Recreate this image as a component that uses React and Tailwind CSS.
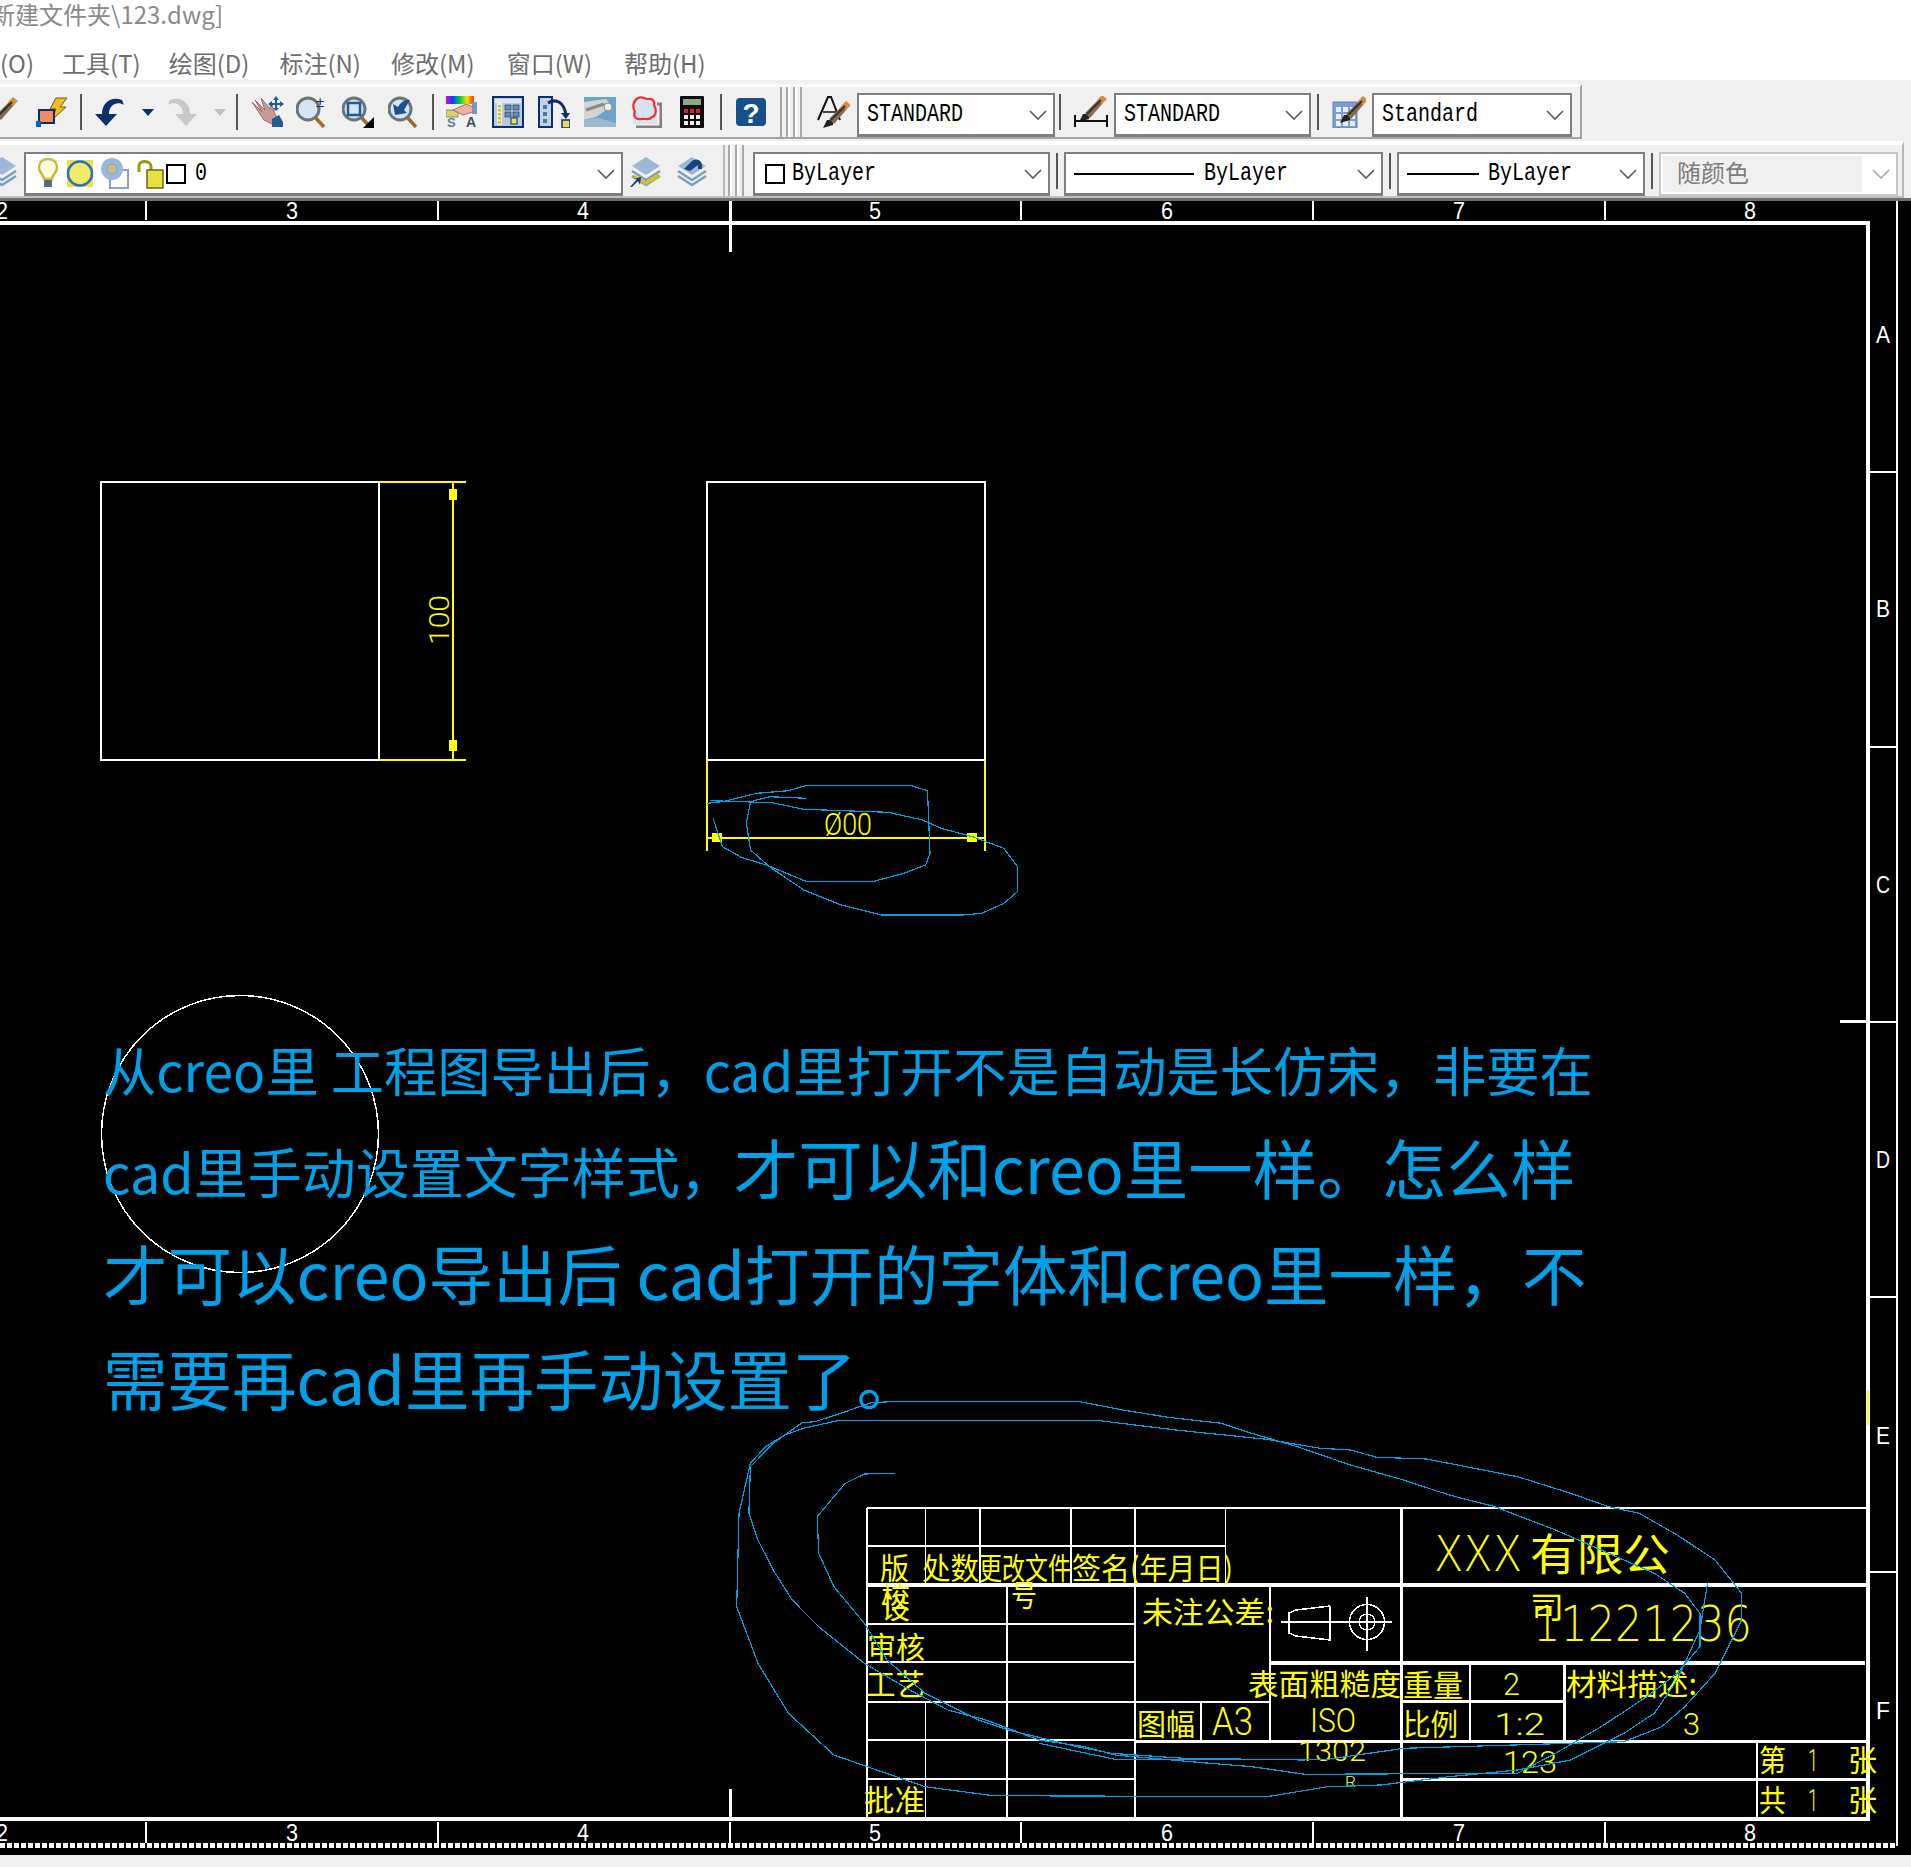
import React from 'react';

const CJK = "font-['Noto_Sans_CJK_SC','Noto_Sans',sans-serif]";
const MONO = "font-['Liberation_Mono','Noto_Sans_CJK_SC',monospace]";
const NAVY = '#0b2f6b';

function Chevron({ color = '#5a5a5a' }) {
  return (
    <svg width="18" height="12" viewBox="0 0 18 12" className="shrink-0">
      <polyline points="1,2 9,10 17,2" fill="none" stroke={color} strokeWidth="1.6" />
    </svg>
  );
}

function Combo({ className, children, disabled = false }) {
  return (
    <div className={`relative flex items-center shrink-0 h-[44px] self-end ${disabled ? 'border-2 border-[#c8c8c8] bg-white' : 'border-2 border-b-[3px] border-[#7f7f7f] bg-white'} ${MONO} text-[20px] text-black ${className}`}>
      {children}
      <div className="absolute right-[6px] top-[14px]">
        <Chevron color={disabled ? '#a8a8a8' : '#5a5a5a'} />
      </div>
    </div>
  );
}

// the combos use a tall narrow bitmap font in the original
function Tall({ className = '', children }) {
  return <span className={`inline-block scale-y-[1.25] ${className}`}>{children}</span>;
}

function Sep({ className = '' }) {
  return <div className={`w-[2px] h-[36px] bg-[#555555] shrink-0 ${className}`} />;
}

function Grip({ className = '' }) {
  return (
    <div className={`flex self-stretch shrink-0 ${className}`}>
      <div className="w-[2px] bg-[#a8a8a8]" />
      <div className="w-[2px] bg-white" />
      <div className="w-[3px]" />
      <div className="w-[2px] bg-[#a8a8a8]" />
      <div className="w-[2px] bg-white" />
      <div className="w-[3px]" />
      <div className="w-[2px] bg-[#a8a8a8]" />
    </div>
  );
}

function Ico({ w = 32, h = 32, className = '', children }) {
  return (
    <svg width={w} height={h} viewBox={`0 0 ${w} ${h}`} className={`shrink-0 ${className}`}>
      {children}
    </svg>
  );
}

const Brush = ({ dx = 0, dy = 0 }) => (
  <g transform={`translate(${dx} ${dy})`}>
    <polygon points="2,28 6,20 12,20 12,25" fill="#222" />
    <polygon points="8,19 22,5 26,9 13,24" fill="#8a6a4a" />
    <polygon points="20,6 25,1 30,5 25,10" fill="#d98a3a" />
    <line x1="10" y1="20" x2="24" y2="6" stroke="#333" strokeWidth="2" />
  </g>
);

const Lens = ({ children }) => (
  <>
    <line x1="18" y1="20" x2="28" y2="31" stroke="#a56a2a" strokeWidth="3.5" />
    <circle cx="12" cy="13" r="11" fill="#d5e6f2" stroke="#6d7478" strokeWidth="3" />
    {children}
  </>
);

const LayerStack = ({ top = '#9db8d6' }) => (
  <g>
    <polygon points="16,2 30,11 16,20 2,11" fill={top} />
    <polyline points="2,16 16,25 30,16" fill="none" stroke="#7f9cbd" strokeWidth="2.5" />
    <polyline points="2,21 16,30 30,21" fill="none" stroke="#7f9cbd" strokeWidth="2.5" />
  </g>
);

function Toolbars() {
  return (
    <div className="h-[121px] bg-[#f0f0f0] flex flex-col shrink-0 overflow-hidden">
      {/* first row: standard tools + style combos */}
      <div className="mt-[4px] h-[55px] w-[1582px] border-t-[3px] border-white border-b-2 border-b-[#a4a4a4] border-r-2 border-r-[#a4a4a4] flex items-center shrink-0">
        <Ico className="-ml-[12px]"><Brush /></Ico>
        <Ico className="ml-[16px]">
          <polygon points="20,2 31,2 24,11 30,11 16,24 20,13 14,13" fill="#f0c020" stroke="#6d5a10" strokeWidth="1" />
          <rect x="3" y="14" width="15" height="13" fill="#f58a5c" stroke="#0b2f6b" strokeWidth="2" />
          <rect x="0" y="25" width="5" height="6" fill="#0a62c0" />
        </Ico>
        <Sep className="ml-[12px]" />
        <Ico w={33} className="ml-[12px]">
          <path d="M12 30 L1 18 L8 18 C8 6 18 0 28 4 L30 9 C24 5 15 8 15 18 L23 18 Z" fill={NAVY} />
        </Ico>
        <svg width="12" height="8" viewBox="0 0 12 8" className="ml-[15px] shrink-0"><polygon points="0,1 12,1 6,8" fill={NAVY} /></svg>
        <Ico w={33} className="ml-[11px]">
          <path d="M21 30 L32 18 L25 18 C25 6 15 0 5 4 L3 9 C9 5 18 8 18 18 L10 18 Z" fill="#c8c8c8" />
        </Ico>
        <svg width="12" height="8" viewBox="0 0 12 8" className="ml-[16px] shrink-0"><polygon points="0,1 12,1 6,8" fill="#c0c0c8" /></svg>
        <Sep className="ml-[10px]" />
        <Ico w={35} className="ml-[12px]">
          <path d="M2 6 L12 16 L5 4 L15 14 L11 2 L20 13 L21 6 L25 18 L28 24 L22 28 L14 24 Z" fill="#c99a94" stroke="#9c6a66" strokeWidth="1" />
          <polygon points="22,23 29,19 33,26 33,31 22,31" fill="#1f5d97" />
          <path d="M26 0 L29 4 L27 4 L27 7 L30 7 L30 5 L34 8 L30 11 L30 9 L27 9 L27 12 L29 12 L26 15 L23 12 L25 12 L25 9 L22 9 L22 11 L18 8 L22 5 L22 7 L25 7 L25 4 L23 4 Z" fill="#1f5d97" />
        </Ico>
        <Ico className="ml-[11px]">
          <Lens />
          <text x="20" y="11" fontSize="15" fill={NAVY} className="font-['Liberation_Sans']">±</text>
        </Ico>
        <Ico className="ml-[14px]">
          <Lens><rect x="6" y="7" width="12" height="12" fill="none" stroke="#1f5d97" strokeWidth="2.5" /></Lens>
          <polygon points="32,21 32,32 21,32" fill="#000" />
        </Ico>
        <Ico className="ml-[14px]">
          <Lens><path d="M7 19 L5 8 L10 11 C13 6 17 3 22 4 L16 14 L19 17 Z" fill="#1f4f8c" /></Lens>
        </Ico>
        <Sep className="ml-[12px]" />
        <Ico className="ml-[12px]">
          <defs>
            <linearGradient id="rb" x1="0" y1="0" x2="1" y2="0">
              <stop offset="0" stopColor="#e000e0" /><stop offset=".25" stopColor="#0040ff" />
              <stop offset=".5" stopColor="#00d040" /><stop offset=".75" stopColor="#ffe000" /><stop offset="1" stopColor="#ff3000" />
            </linearGradient>
          </defs>
          <rect x="0" y="0" width="28" height="8" fill="url(#rb)" />
          <rect x="0" y="14" width="12" height="7" fill="#dccf70" stroke="#8a8a8a" />
          <rect x="26" y="6" width="5" height="12" fill="#6f9fc8" />
          <path d="M7 14 L20 8 L27 11 L27 16 L17 19 Z" fill="#efb1a6" stroke="#8c5a5a" strokeWidth=".8" />
          <text x="1" y="31" fontSize="13" fill="#6a7a8c" fontWeight="700" className="font-['Liberation_Sans']">S</text>
          <text x="20" y="31" fontSize="14" fill="#44505c" fontWeight="700" className="font-['Liberation_Sans']">A</text>
        </Ico>
        <Ico className="ml-[14px]">
          <rect x="1" y="1" width="30" height="30" fill="#b9c9dc" stroke={NAVY} strokeWidth="2" />
          <rect x="3" y="3" width="26" height="4" fill="#dfe7f1" />
          <rect x="5" y="7" width="5" height="22" fill="#e6ecf3" />
          {[9, 13, 17, 21, 25].map((y) => <rect key={y} x="6" y={y} width="3" height="2.5" fill="#e0c000" />)}
          {[[13, 9], [21, 9], [13, 16], [21, 16]].map(([x, y]) => <rect key={x + '-' + y} x={x} y={y} width="6" height="5" fill="#6b8aa8" stroke={NAVY} strokeWidth=".6" />)}
          <rect x="19" y="22" width="6" height="6" fill="#f0e060" stroke={NAVY} />
        </Ico>
        <Ico className="ml-[14px]">
          <path d="M1 1 H14 V31 H1 Z" fill="#c4d2e2" stroke={NAVY} strokeWidth="2" />
          {[9, 16, 23].map((y) => <rect key={y} x="5" y={y} width="4" height="4" fill="#4a7a9a" />)}
          <path d="M10 7 C18 2 26 6 28 19" fill="none" stroke={NAVY} strokeWidth="3" />
          <polygon points="23,17 32,17 28,23" fill={NAVY} />
          <rect x="24" y="24" width="8" height="8" fill="#ecd95a" stroke={NAVY} strokeWidth="1.5" />
        </Ico>
        <Ico className="ml-[14px]">
          <rect x="0" y="1" width="32" height="30" fill="#6fa3cf" />
          <polygon points="0,6 22,3 28,10 12,21 0,24" fill="#d4d4d0" />
          <polyline points="2,14 20,8" stroke="#8a8a86" strokeWidth="3" fill="none" />
          <polygon points="0,24 14,22 32,27 32,31 0,31" fill="#9cb8ce" />
          <circle cx="24" cy="11" r="4" fill="#eeeeea" stroke="#8a8a86" />
        </Ico>
        <Ico className="ml-[14px]">
          <polyline points="27,8 31,8 31,31 6,31" fill="none" stroke="#808080" strokeWidth="3" />
          <rect x="3" y="4" width="24" height="24" fill="#dce3ec" />
          <path d="M8 2 C12 0 15 3 18 3 C23 2 25 6 24 9 C27 14 26 20 22 21 C19 25 15 22 11 23 C6 24 3 20 5 16 C2 11 3 5 8 2 Z" fill="#d6e2ee" stroke="#ee3030" strokeWidth="2.2" />
        </Ico>
        <Ico w={24} className="ml-[18px]">
          <rect x="0" y="0" width="24" height="32" rx="1" fill="#0c0c0c" />
          <rect x="3" y="3" width="18" height="6" fill="#8aa88a" />
          {[4, 10, 16].map((x) => <rect key={x} x={x} y="13" width="4" height="4" fill="#e02020" />)}
          {[4, 10, 16].map((x) => <rect key={x} x={x} y="19" width="4" height="4" fill="#f0f0f0" />)}
          {[4, 10, 16].map((x) => <rect key={x} x={x} y="25" width="4" height="4" fill="#f0f0f0" />)}
        </Ico>
        <Sep className="ml-[16px]" />
        <Ico w={30} className="ml-[14px]">
          <rect x="0" y="2" width="30" height="28" rx="4" fill="#14508c" />
          <text x="15" y="27" textAnchor="middle" fontSize="28" fontWeight="700" fill="#fff" className="font-['Liberation_Sans']">?</text>
        </Ico>
        <div className="ml-[14px] w-[2px] self-stretch bg-[#a4a4a4] shrink-0" />
        <Grip className="ml-[4px]" />
        <Ico className="ml-[15px]" w={33}>
          <path d="M1 24 L11 1 L14 1 L23 24" fill="none" stroke="#111" strokeWidth="2" />
          <line x1="6" y1="16" x2="19" y2="16" stroke="#111" strokeWidth="1.5" />
          <Brush dx="4" dy="4" />
        </Ico>
        <Combo className="ml-[7px] w-[198px] pl-[8px]"><Tall>STANDARD</Tall></Combo>
        <Sep className="ml-[4px]" />
        <Ico className="ml-[13px]" w={34}>
          <Brush dx="3" dy="-2" />
          <line x1="1" y1="25" x2="33" y2="25" stroke="#111" strokeWidth="2" />
          <line x1="1" y1="19" x2="1" y2="31" stroke="#111" strokeWidth="2" />
          <line x1="33" y1="19" x2="33" y2="31" stroke="#111" strokeWidth="2" />
        </Ico>
        <Combo className="ml-[6px] w-[197px] pl-[8px]"><Tall>STANDARD</Tall></Combo>
        <Sep className="ml-[6px]" />
        <Ico className="ml-[13px]" w={34}>
          <rect x="1" y="6" width="24" height="26" fill="#7d9fd0" stroke="#5f80ad" />
          {[11, 18, 25].map((y) => [4, 11, 18].map((x) => <rect key={x + '-' + y} x={x} y={y} width="5" height="5" fill="#e6edf8" />))}
          <Brush dx="6" dy="-1" />
        </Ico>
        <Combo className="ml-[6px] w-[200px] pl-[8px]"><Tall>Standard</Tall></Combo>
      </div>

      {/* second row: layer + bylayer combos */}
      <div className="mt-[2px] h-[58px] w-[1904px] border-t-[4px] border-white border-b-[3px] border-b-[#c0c0c0] border-r-2 border-r-[#b8b8b8] flex items-center shrink-0">
        <Ico w={16} className="shrink-0 overflow-visible"><g transform="translate(-14 0)"><LayerStack /></g></Ico>
        <Combo className="ml-[8px] w-[599px]">
          <Ico w={20} className="ml-[12px]">
            <path d="M10 1 C16 1 19 5 19 10 C19 14 15 16 14 21 L6 21 C5 16 1 14 1 10 C1 5 4 1 10 1 Z" fill="#fffde0" stroke="#c9bb40" strokeWidth="2.5" />
            <rect x="6" y="22" width="8" height="7" fill="#5a6a80" />
          </Ico>
          <Ico w={28} className="ml-[8px]">
            <rect x="1" y="2" width="26" height="27" fill="#f0e040" />
            <circle cx="14" cy="15.5" r="12" fill="#f3e868" stroke="#1f72c0" strokeWidth="2.5" />
          </Ico>
          <Ico w={30} className="ml-[6px]">
            <rect x="10" y="12" width="18" height="18" fill="#fff" stroke="#8fa3b8" strokeWidth="2" />
            <circle cx="12" cy="11" r="11" fill="#9ab8d8" />
            <circle cx="12" cy="11" r="5" fill="#c7bd85" stroke="#8aa0b0" />
          </Ico>
          <Ico w={28} className="ml-[6px]">
            <path d="M3 14 V8 C3 2 14 2 15 8 V12" fill="none" stroke="#9c9a10" strokeWidth="3" />
            <rect x="11" y="12" width="16" height="18" fill="#e8e040" stroke="#6a6a10" strokeWidth="1.5" />
          </Ico>
          <div className="ml-[2px] w-[20px] h-[20px] border-2 border-black shrink-0" />
          <Tall className="ml-[9px]">0</Tall>
        </Combo>
        <Ico className="ml-[7px]">
          <LayerStack />
          <polygon points="4,20 16,26 28,18 30,22 16,30 4,24" fill="#d8c020" />
          <polygon points="0,32 7,24 3,24 11,22 10,30 8,26 2,32" fill="#163f7a" />
        </Ico>
        <Ico className="ml-[14px]">
          <LayerStack />
          <path d="M8 14 L16 6 C22 2 27 6 26 14 L22 14 L22 10 L14 16 Z" fill="#14437f" />
        </Ico>
        <div className="ml-[15px] w-[2px] self-stretch bg-[#b8b8b8] shrink-0" />
        <Grip className="ml-[3px]" />
        <Combo className="ml-[9px] w-[297px] pl-[10px]">
          <div className="w-[20px] h-[20px] border-2 border-black shrink-0" />
          <Tall className="ml-[7px]">ByLayer</Tall>
        </Combo>
        <Sep className="ml-[6px]" />
        <Combo className="ml-[6px] w-[319px] pl-[8px]">
          <div className="w-[120px] h-[2px] bg-black shrink-0" />
          <Tall className="ml-[10px]">ByLayer</Tall>
        </Combo>
        <Sep className="ml-[6px]" />
        <Combo className="ml-[6px] w-[248px] pl-[8px]">
          <div className="w-[72px] h-[2px] bg-black shrink-0" />
          <Tall className="ml-[9px]">ByLayer</Tall>
        </Combo>
        <Sep className="ml-[6px]" />
        <Combo disabled className="ml-[6px] w-[239px]">
          <div className={`m-[2px] h-[36px] w-[199px] bg-[#f0f0f0] pl-[14px] ${CJK} text-[24px] leading-[32px] text-[#7c7c7c]`}>随颜色</div>
        </Combo>
      </div>
      <div className="h-[3px] bg-[#6e6e6e] shrink-0 -mt-[1px]" />
    </div>
  );
}

// trace helper: points read off the reference crops
const tr = (list, ox, oy, sx) => list.map(([x, y]) => `${(ox + x / sx).toFixed(1)},${(oy + y / 3).toFixed(1)}`).join(' ');

const curves = [
  tr([[190, 75], [200, 68], [225, 65], [474, 65], [530, 90], [590, 112], [660, 130], [700, 160], [760, 200], [830, 255], [900, 300], [960, 345], [1020, 380], [1100, 450], [1170, 520], [1230, 580], [1270, 640], [1290, 700], [1290, 800], [1260, 880], [1220, 950], [1160, 1040], [1100, 1120], [1050, 1180], [770, 1183], [700, 1160], [620, 1145], [520, 1125], [480, 1100], [420, 1080], [350, 1020], [300, 990], [250, 930], [190, 850], [130, 740], [95, 660], [70, 570], [50, 480], [38, 400], [40, 260], [70, 190], [108, 128], [125, 125], [165, 95], [190, 75]], 720, 1380, 1.3165),
  tr([[85, 165], [110, 145], [155, 122], [500, 122], [600, 150], [720, 178], [790, 205], [830, 210], [865, 232], [930, 237], [1050, 290], [1120, 340], [1170, 380], [1210, 400], [1260, 465], [1310, 540], [1345, 640], [1345, 720], [1310, 880], [1270, 980], [1240, 1040], [1190, 1085], [900, 1105], [800, 1138], [520, 1138], [420, 1090]], 720, 1380, 1.3165),
  tr([[230, 280], [190, 282], [165, 310], [150, 350], [128, 410], [130, 520], [150, 620], [190, 730], [220, 840], [270, 940], [340, 1020], [380, 1050], [470, 1100], [515, 1120], [610, 1135], [770, 1140]], 720, 1380, 1.3165),
  tr([[85, 165], [60, 200], [40, 250], [25, 400], [22, 680], [50, 850], [90, 1000], [150, 1125], [200, 1165], [270, 1220], [360, 1247], [720, 1250], [800, 1220], [870, 1215], [960, 1190], [1050, 1170], [1120, 1140], [1190, 1060], [1230, 1000], [1260, 900], [1290, 750], [1300, 610]], 720, 1380, 1.3165),
  tr([[1195, 1015], [1135, 1010], [1105, 1025], [1098, 1090], [1105, 1170], [1135, 1220], [1190, 1290], [1250, 1335], [1315, 1365], [1445, 1365], [1475, 1360], [1510, 1330], [1532, 1295], [1532, 1220], [1510, 1165], [1460, 1130], [1410, 1105], [1380, 1080], [1325, 1057], [1190, 1048], [1140, 1028], [1040, 1022]], 60, 460, 1.6),
  tr([[1035, 1030], [1060, 1025], [1115, 1000], [1165, 992], [1195, 976], [1360, 976], [1388, 992], [1392, 1180], [1385, 1215], [1350, 1240], [1300, 1265], [1195, 1265], [1130, 1215], [1090, 1192], [1060, 1160], [1045, 1075]], 60, 460, 1.6),
];

// white frame lines of the title block: x1 y1 x2 y2 width
const block = [
  [867, 1508, 1867, 1508, 2], [867, 1546, 1225, 1546, 2], [867, 1585, 1867, 1585, 4], [867, 1624, 1135, 1624, 2],
  [867, 1662, 1135, 1662, 2], [867, 1702, 1270, 1702, 2], [867, 1740, 1135, 1740, 2], [1135, 1741, 1867, 1741, 3],
  [867, 1779, 1135, 1779, 2], [1401, 1779, 1867, 1779, 3], [1270, 1663, 1865, 1663, 4], [1401, 1701, 1564, 1701, 3],
  [867, 1508, 867, 1818, 2], [925, 1508, 925, 1585, 1], [925, 1702, 925, 1818, 1], [980, 1508, 980, 1585, 2],
  [1007, 1585, 1007, 1818, 2], [1071, 1508, 1071, 1585, 2], [1135, 1508, 1135, 1818, 2.5], [1225, 1508, 1225, 1585, 1],
  [1201, 1702, 1201, 1741, 2], [1270, 1585, 1270, 1741, 2], [1401, 1508, 1401, 1818, 3], [1470, 1663, 1470, 1741, 2],
  [1564, 1663, 1564, 1741, 3], [1757, 1741, 1757, 1818, 2],
];

const CT = ({ x, y, len, size = 30, children }) => (
  <text x={x} y={y} textLength={len} lengthAdjust="spacingAndGlyphs" fontSize={size} fill="#ffff00" className={CJK}>{children}</text>
);
// white ruler marks stay regular; yellow drawing text is a thin single-line font in the original
const LT = ({ x, y, len, size = 36, fill = '#ffff00', transform, children }) => {
  let face = "font-['Roboto',sans-serif]";
  let weight = 300;
  if (fill === '#fff') {
    face = "font-['Liberation_Sans',sans-serif]";
    weight = 400;
  } else if (size > 40) {
    face = "font-['DejaVu_Sans',sans-serif]";
    weight = 200;
  }
  return (
    <text x={x} y={y} textLength={len} lengthAdjust="spacingAndGlyphs" fontSize={size} fill={fill} fontWeight={weight} transform={transform} className={face}>
      {children}
    </text>
  );
};

function Drawing() {
  const rulerX = [146, 438, 730, 1021, 1313, 1605, 1897];
  const nums = [[-4, '2'], [286, '3'], [577, '4'], [869, '5'], [1161, '6'], [1453, '7'], [1744, '8']];
  const sideTicks = [472, 747, 1022, 1297, 1572];
  const letters = [['A', 343], ['B', 617], ['C', 893], ['D', 1168], ['E', 1444], ['F', 1719]];

  return (
    <svg width="1911" height="1654" viewBox="0 201 1911 1654" className="block">
      <g stroke="#fff" strokeWidth="2" shapeRendering="crispEdges">
        {/* sheet border and rulers */}
        <rect x="-4" y="223" width="1872" height="1596" fill="none" strokeWidth="4" />
        <line x1="1897" y1="201" x2="1897" y2="1846" />
        {rulerX.map((x) => <line key={x} x1={x} y1="201" x2={x} y2="220" />)}
        {rulerX.map((x) => <line key={x} x1={x} y1="1822" x2={x} y2="1843" />)}
        {sideTicks.map((y) => <line key={y} x1="1870" y1={y} x2="1896" y2={y} />)}
        <line x1="0" y1="1845" x2="1897" y2="1845" strokeWidth="5" strokeDasharray="5 2" />
        <line x1="730" y1="201" x2="730" y2="252" strokeWidth="3" />
        <line x1="730" y1="1789" x2="730" y2="1818" strokeWidth="3" />
        <line x1="1840" y1="1021" x2="1868" y2="1021" strokeWidth="3" />

        {/* the two views */}
        <rect x="101" y="482" width="278" height="278" fill="none" />
        <rect x="707" y="482" width="278" height="278" fill="none" />
        <circle cx="240" cy="1134" r="138.5" fill="none" strokeWidth="1.5" />

        {block.map(([x1, y1, x2, y2, w], i) => <line key={i} x1={x1} y1={y1} x2={x2} y2={y2} strokeWidth={w} />)}

        {/* tolerance symbol */}
        <g fill="none" strokeWidth="1.5">
          <polyline points="1330,1606 1296,1610 1289,1613 1289,1633 1296,1636 1330,1640 1330,1606" />
          <line x1="1281" y1="1622" x2="1392" y2="1622" />
          <line x1="1367" y1="1597" x2="1367" y2="1651" />
          <circle cx="1367" cy="1622" r="17.5" />
          <circle cx="1367" cy="1622" r="8" />
        </g>
      </g>

      {nums.map(([x, n]) => (
        <g key={n}>
          <LT x={x} y="219" len="12" size="24" fill="#fff">{n}</LT>
          <LT x={x} y="1841" len="12" size="24" fill="#fff">{n}</LT>
        </g>
      ))}
      {letters.map(([l, y]) => <LT key={l} x="1876" y={y} len="14" size="24" fill="#fff">{l}</LT>)}

      {/* dimensions */}
      <g stroke="#ffff00" strokeWidth="2" shapeRendering="crispEdges">
        <line x1="379" y1="482" x2="466" y2="482" />
        <line x1="379" y1="760" x2="466" y2="760" />
        <line x1="453" y1="482" x2="453" y2="760" />
        <rect x="450" y="490" width="6" height="9" fill="#ffff00" />
        <rect x="450" y="741" width="6" height="9" fill="#ffff00" />
        <line x1="707" y1="760" x2="707" y2="851" />
        <line x1="985" y1="760" x2="985" y2="851" />
        <line x1="707" y1="838" x2="985" y2="838" />
        <rect x="713" y="834" width="8" height="7" fill="#ffff00" />
        <rect x="968" y="834" width="8" height="7" fill="#ffff00" />
        <line x1="1868" y1="1390" x2="1868" y2="1425" />
      </g>
      <LT x="0" y="0" len="50" size="28" transform="translate(449 645) rotate(-90)">100</LT>
      <LT x="824" y="835" len="48" size="32">Ø00</LT>

      {/* title block text */}
      <CT x="880" y="1579" len="29">版</CT>
      <CT x="922" y="1579" len="57">处数</CT>
      <CT x="979" y="1579" len="92">更改文件</CT>
      <CT x="1072" y="1579" len="58">签名</CT>
      <CT x="1130" y="1579" len="103">(年月日)</CT>
      <CT x="1011" y="1606" len="26">号</CT>
      <CT x="881" y="1608" len="29">校</CT>
      <CT x="881" y="1618" len="29">设</CT>
      <CT x="867" y="1658" len="58">审核</CT>
      <CT x="866" y="1695" len="59">工艺</CT>
      <CT x="864" y="1811" len="61">批准</CT>
      <CT x="1142" y="1623" len="132">未注公差:</CT>
      <LT x="1434" y="1571" len="88" size="50">XXX</LT>
      <CT x="1530" y="1571" len="140" size="44">有限公</CT>
      <CT x="1530" y="1618" len="34">司</CT>
      <LT x="1533" y="1641" len="219" size="50">11221236</LT>
      <CT x="1248" y="1695" len="153">表面粗糙度</CT>
      <CT x="1403" y="1696" len="60">重量</CT>
      <LT x="1503" y="1695" len="17" size="32">2</LT>
      <CT x="1566" y="1695" len="131">材料描述:</CT>
      <CT x="1137" y="1735" len="58">图幅</CT>
      <LT x="1212" y="1735" len="41" size="38">A3</LT>
      <LT x="1310" y="1732" len="46" size="34">ISO</LT>
      <CT x="1403" y="1735" len="55">比例</CT>
      <LT x="1494" y="1735" len="51" size="32">1:2</LT>
      <LT x="1683" y="1735" len="17" size="32">3</LT>
      <LT x="1298" y="1761" len="68" size="28">1302</LT>
      <LT x="1503" y="1773" len="54" size="32">123</LT>
      <LT x="1345" y="1787" len="11" size="14">R</LT>
      <CT x="1759" y="1771" len="27">第</CT>
      <LT x="1808" y="1771" len="10" size="32">1</LT>
      <CT x="1848" y="1771" len="29">张</CT>
      <CT x="1759" y="1811" len="27">共</CT>
      <LT x="1808" y="1811" len="10" size="32">1</LT>
      <CT x="1848" y="1811" len="29">张</CT>

      {/* hand drawn annotation strokes */}
      <g fill="none" stroke="#00a0e9" strokeWidth="1.2" shapeRendering="crispEdges">
        {curves.map((p, i) => <polyline key={i} points={p} />)}
      </g>
    </svg>
  );
}

export default function App() {
  return (
    <div className={`w-[1911px] h-[1867px] overflow-hidden bg-white flex flex-col ${CJK}`}>
      <div className="h-[45px] shrink-0 -ml-[9px] text-[#8a8a8a] text-[24px] leading-[28px]">新建文件夹\123.dwg]</div>
      <div className="h-[35px] shrink-0 flex items-center gap-[28px] text-[24px] text-[#6e6e6e] leading-none">
        <span>(O)</span>
        <span>工具(T)</span>
        <span>绘图(D)</span>
        <span className="ml-[2px]">标注(N)</span>
        <span className="ml-[2px]">修改(M)</span>
        <span className="ml-[4px]">窗口(W)</span>
        <span className="ml-[4px]">帮助(H)</span>
      </div>
      <Toolbars />
      <div className="relative h-[1654px] shrink-0 bg-black">
        <Drawing />
        {/* pasted question text over the drawing */}
        <div className="absolute left-[103px] top-[824px] w-[1650px] text-[#00a0e9] text-[64.5px] whitespace-nowrap">
          <p className="text-[53.3px] leading-[88px]">从creo里 工程图导出后，cad里打开不是自动是长仿宋，非要在</p>
          <p className="leading-[106px]"><span className="text-[54px]">cad里手动设置文字样式，</span>才可以和creo里一样。怎么样</p>
          <p className="leading-[96px]">才可以creo导出后 cad打开的字体和creo里一样，不</p>
          <p className="leading-[114px]">需要再cad里再手动设置了。</p>
        </div>
      </div>
      <div className="flex-1 bg-[#f0f0f0]" />
    </div>
  );
}
